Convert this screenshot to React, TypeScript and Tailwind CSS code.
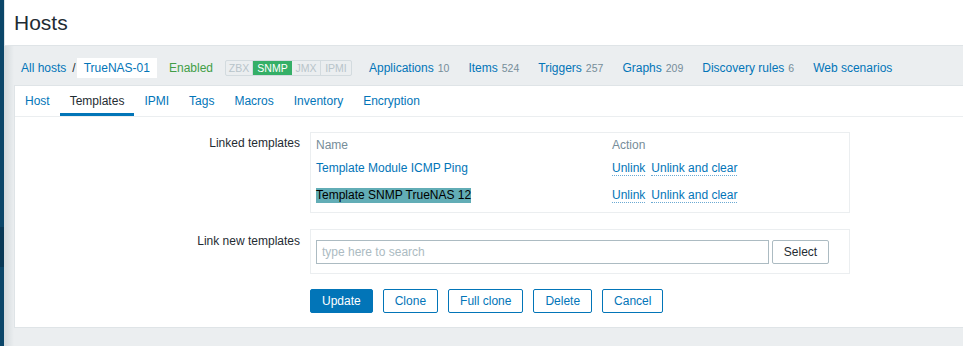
const font = { fontFamily: '"Liberation Sans", Arial, sans-serif' };

const navLinks = [
    { label: "Applications", count: "10" },
    { label: "Items", count: "524" },
    { label: "Triggers", count: "257" },
    { label: "Graphs", count: "209" },
    { label: "Discovery rules", count: "6" },
    { label: "Web scenarios", count: "" },
];

const tabs = ["Host", "Templates", "IPMI", "Tags", "Macros", "Inventory", "Encryption"];

const buttons = ["Clone", "Full clone", "Delete", "Cancel"];

export default function App() {
    return (
        <div style={font} className="w-[963px] h-[346px] overflow-hidden flex bg-[#ebeef0] text-[12px] text-[#1f2c33]">
            {/* sidebar edge */}
            <div className="w-[4px] flex flex-col bg-[#0b4669] shrink-0">
                <div className="h-[227px]" />
                <div className="h-[40px] bg-[#083856]" />
                <div className="flex-1" />
            </div>

            <div className="flex-1 flex flex-col min-w-0">
                <header className="h-[46px] shrink-0 bg-white border-b border-l border-[#dfe4e7] flex items-center pl-[9px] pt-[1px]">
                    <h1 className="text-[21px] leading-[24px] text-[#1f2c33]">Hosts</h1>
                </header>

                <div className="flex-1 flex flex-col bg-[linear-gradient(to_right,#d3d9dc_0px,#ebeef0_10px)]">
                    <div className="h-[39px] shrink-0 pt-[5px] pl-[17px] flex items-center whitespace-nowrap">
                        <a className="text-[#0275b8]">All hosts</a>
                        <span className="ml-[6px] mr-[1px] text-[#1f2c33]">/</span>
                        <span className="h-[20px] px-[7px] bg-white text-[#0275b8] flex items-center">TrueNAS-01</span>
                        <span className="ml-[12px] text-[#429e47]">Enabled</span>
                        <div className="ml-[12px] h-[16px] flex border border-[#d3dbdf] rounded-[2px] text-[10.5px] leading-[14px]">
                            <span className="w-[27px] text-center text-[#b8c4ca] border-r border-[#d3dbdf]">ZBX</span>
                            <span className="w-[39px] text-center text-white bg-[#34af67]">SNMP</span>
                            <span className="w-[29px] text-center text-[#b8c4ca] border-r border-[#d3dbdf]">JMX</span>
                            <span className="w-[30px] text-center text-[#b8c4ca]">IPMI</span>
                        </div>
                        <div className="ml-[17px] flex items-baseline gap-[19px]">
                            {navLinks.map((link) => (
                                <span key={link.label} className="flex items-baseline">
                                    <a className="text-[#0275b8]">{link.label}</a>
                                    {link.count && <span className="ml-[4px] text-[10.5px] text-[#768d99]">{link.count}</span>}
                                </span>
                            ))}
                        </div>
                    </div>

                    <div className="ml-[10px] h-[243px] shrink-0 bg-white border-t border-l border-b border-[#dfe4e7] flex flex-col">
                        <div className="h-[31px] shrink-0 flex border-b border-[#ebeef0]">
                            {tabs.map((tab) => (
                                <div
                                    key={tab}
                                    className={
                                        tab === "Templates"
                                            ? "px-[10px] flex items-center text-[#1f2c33] border-b-[3px] border-[#0275b8] pt-[3px]"
                                            : "px-[10px] flex items-center text-[#0275b8]"
                                    }
                                >
                                    {tab}
                                </div>
                            ))}
                        </div>

                        <div className="pt-[15px] flex flex-col">
                            <div className="flex">
                                <div className="w-[285px] shrink-0 text-right pt-[4px] leading-[14px]">Linked templates</div>
                                <div className="ml-[10px] w-[540px] h-[81px] border border-[#ebeef0] flex flex-col pl-[5px]">
                                    <div className="h-[24px] flex items-center text-[#768d99]">
                                        <span className="w-[296px]">Name</span>
                                        <span>Action</span>
                                    </div>
                                    <div className="h-[22px] flex items-center">
                                        <span className="w-[296px] text-[#0275b8]">Template Module ICMP Ping</span>
                                        <UnlinkActions />
                                    </div>
                                    <div className="h-[32px] flex items-center">
                                        <span className="w-[296px]">
                                            <span className="bg-[#62adb6] text-black leading-[15px] inline-block">Template SNMP TrueNAS 12</span>
                                        </span>
                                        <UnlinkActions />
                                    </div>
                                </div>
                            </div>

                            <div className="flex mt-[16px]">
                                <div className="w-[285px] shrink-0 text-right pt-[5px] leading-[14px]">Link new templates</div>
                                <div className="ml-[10px] w-[540px] h-[45px] border border-[#ebeef0] flex items-center pl-[5px]">
                                    <div className="w-[453px] h-[24px] border border-[#acbbc2] flex items-center px-[5px] text-[#acbbc2]">
                                        type here to search
                                    </div>
                                    <button className="ml-[3px] w-[57px] h-[24px] border border-[#acbbc2] rounded-[2px] bg-white text-[#1f2c33]">
                                        Select
                                    </button>
                                </div>
                            </div>

                            <div className="flex mt-[15px] ml-[295px] gap-[10px]">
                                <button className="h-[24px] px-[11px] rounded-[2px] bg-[#0275b8] border border-[#0275b8] text-white">Update</button>
                                {buttons.map((b) => (
                                    <button key={b} className="h-[24px] px-[11px] rounded-[2px] bg-white border border-[#0275b8] text-[#0275b8]">
                                        {b}
                                    </button>
                                ))}
                            </div>
                        </div>
                    </div>
                </div>
            </div>
        </div>
    );
}

function UnlinkActions() {
    return (
        <span className="flex gap-[6px] text-[#0275b8]">
            <a className="leading-[14px] border-b border-dotted border-[#6aa9d3]">Unlink</a>
            <a className="leading-[14px] border-b border-dotted border-[#6aa9d3]">Unlink and clear</a>
        </span>
    );
}
